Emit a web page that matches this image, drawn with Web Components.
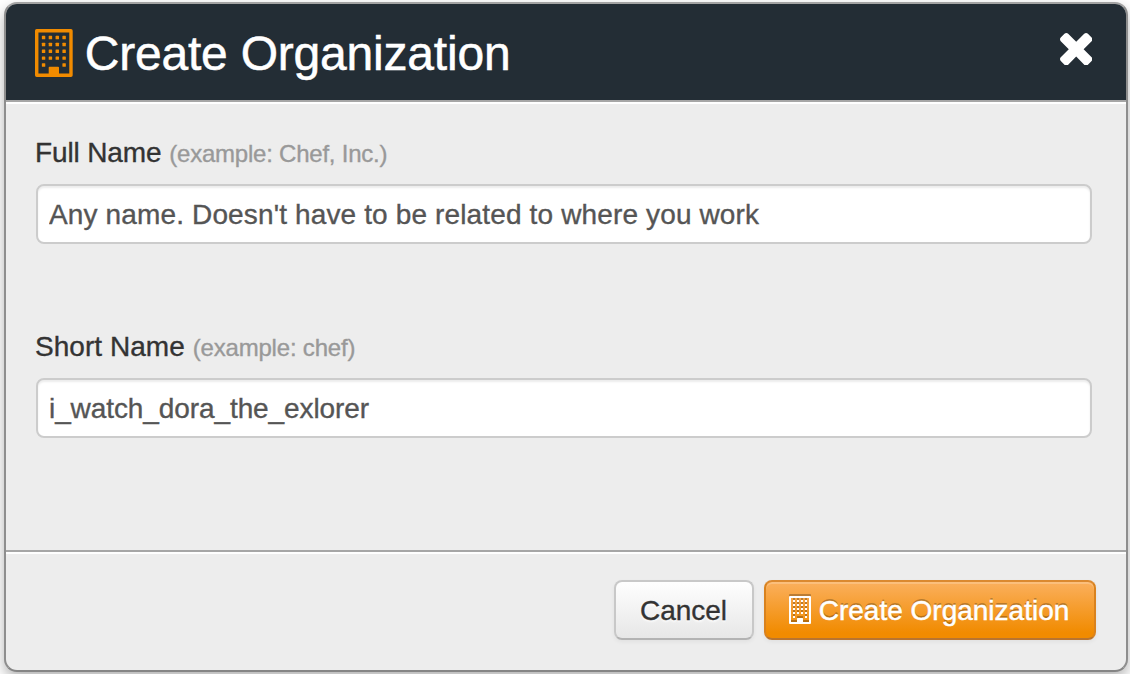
<!DOCTYPE html>
<html lang="en">
<head>
<meta charset="utf-8">
<title>Create Organization</title>
<style>
body{margin:0;background:#fff;font-family:"Liberation Sans",Arial,sans-serif;color:#333;width:1130px;height:674px;overflow:hidden}
</style>
</head>
<body>
<modal-dialog>
  <dialog-title slot="header">Create Organization</dialog-title>
  <form-field label="Full Name" hint="(example: Chef, Inc.)" value="Any name. Doesn't have to be related to where you work" style="--label-ls:-.14px;--hint-ls:-.23px;--value-ls:.14px"></form-field>
  <form-field label="Short Name" hint="(example: chef)" value="i_watch_dora_the_exlorer" style="--label-ls:.04px;--hint-ls:-.2px;--value-ls:-.09px"></form-field>
  <action-button slot="footer">Cancel</action-button>
  <action-button slot="footer" primary><building-icon slot="icon"></building-icon>Create Organization</action-button>
</modal-dialog>
<script>
const define = (name, html, setup) => customElements.define(name, class extends HTMLElement {
  connectedCallback() {
    if (this.shadowRoot) return;
    this.attachShadow({mode: 'open'}).innerHTML = html;
    if (setup) setup(this, this.shadowRoot);
  }
});

define('building-icon', `<style>
:host{display:block;width:22px;height:28px;flex:none}
svg{display:block;width:100%;height:100%;overflow:visible}
</style><svg viewBox="0 0 11 14" fill="currentColor"><path fill-rule="evenodd" d="M.5 0h10a.5.5 0 0 1 .5.5v13a.5.5 0 0 1-.5.5H.5a.5.5 0 0 1-.5-.5V.5A.5.5 0 0 1 .5 0zM1 1v12h3v-1.75q0-.25.25-.25h2.5q.25 0 .25.25V13h3V1z"/><g id="w"></g></svg>`,
(host, root) => {
  let s = '';
  for (let y = 2; y <= 10; y += 2) for (let x = 2; x <= 8; x += 2)
    if (y < 10 || x === 2 || x === 8) s += `<rect x="${x}" y="${y}" width="1" height="1" rx=".15"/>`;
  root.getElementById('w').innerHTML = s;
});

define('close-button', `<style>
:host{display:block;width:32.4px;height:32.4px}
button{all:unset;display:block;width:100%;height:100%;color:#fff;cursor:pointer}
svg{display:block}
</style><button aria-label="Close"><svg width="100%" height="100%" viewBox="302 366 1188 1188" fill="currentColor"><path d="M1490 1322q0 40-28 68l-136 136q-28 28-68 28t-68-28l-294-294-294 294q-28 28-68 28t-68-28l-136-136q-28-28-28-68t28-68l294-294-294-294q-28-28-28-68t28-68l136-136q28-28 68-28t68 28l294 294 294-294q28-28 68-28t68 28l136 136q28 28 28 68t-28 68l-294 294 294 294q28 28 28 68z"/></svg></button>`);

define('dialog-title', `<style>
:host{display:flex;align-items:center;padding-top:2px;color:#fff}
building-icon{width:37.7px;height:48px;color:#f18b00}
h1{margin:2px 0 0 12px;font-size:48px;line-height:56px;font-weight:400;letter-spacing:-.2px;white-space:nowrap;-webkit-text-stroke:.5px currentColor}
</style><building-icon></building-icon><h1><slot></slot></h1>`);

define('form-field', `<style>
:host{display:block;height:194px}
label{display:flex;align-items:baseline;height:48px;line-height:34px;font-size:28px;white-space:nowrap;letter-spacing:var(--label-ls,0);-webkit-text-stroke:.35px currentColor}
small{font-size:24px;color:#999;margin-left:8px;letter-spacing:var(--hint-ls,0)}
input{display:block;box-sizing:border-box;width:1056px;height:60px;margin:0 0 0 1px;padding:2px 11px 0;border:2px solid #ccc;border-radius:8px;background:#fff;box-shadow:inset 0 2px 2px rgba(0,0,0,.075);font:28px "Liberation Sans",Arial,sans-serif;color:#555;letter-spacing:var(--value-ls,0);outline:0;-webkit-text-stroke:.35px currentColor}
</style><label for="i"><span></span><small></small></label><input id="i">`,
(host, root) => {
  root.querySelector('span').textContent = host.getAttribute('label');
  root.querySelector('small').textContent = host.getAttribute('hint');
  root.querySelector('input').value = host.getAttribute('value');
});

define('action-button', `<style>
:host{display:block}
button{display:flex;align-items:center;justify-content:center;gap:8px;box-sizing:border-box;width:140px;height:60px;padding:0 1px 0 0;margin:0;border:2px solid #c8c8c8;border-bottom-color:#b3b3b3;border-radius:8px;background:linear-gradient(#fff,#e6e6e6);background-clip:border-box;background-origin:border-box;box-shadow:inset 0 2px 0 rgba(255,255,255,.2),0 2px 4px rgba(0,0,0,.05);color:#333;font:28px/40px "Liberation Sans",Arial,sans-serif;text-shadow:0 2px 2px rgba(255,255,255,.75);white-space:nowrap;-webkit-text-stroke:.35px currentColor}
span{margin-top:2px}
:host([primary]) button{width:332px;padding-right:2px;border-color:#db892f #d9821e #b87430;background-image:linear-gradient(#fbb161,#f18b00 88%);color:#fff;text-shadow:0 -2px 0 rgba(0,0,0,.25);-webkit-text-stroke-width:.5px}
::slotted(building-icon){filter:drop-shadow(0 -2px 0 rgba(0,0,0,.25))}
</style><button><slot name="icon"></slot><span><slot></slot></span></button>`);

define('modal-dialog', `<style>
:host{display:flex;flex-direction:column;box-sizing:border-box;width:1124px;height:670px;margin:2px 0 0 4px;border:2px solid #8e8e8e;border-top-color:#a3a3a3;border-bottom-color:#858585;border-radius:13px;background:#ededed;box-shadow:0 6px 14px rgba(0,0,0,.3);overflow:hidden}
header{display:flex;align-items:center;justify-content:space-between;box-sizing:border-box;height:98px;padding:0 34px 0 29px;background:#232d35;border-bottom:2px solid #a6a6a6;flex:none}
close-button{margin-bottom:6px}
main{box-sizing:border-box;height:448px;border-top:2px solid #fff;padding:32px 29px 0;flex:none}
footer{display:flex;justify-content:flex-end;gap:10px;flex:1;border-top:2px solid #a6a6a6;box-shadow:inset 0 2px 0 #fff;padding:28px 30px 0 0}
</style><header><slot name="header"></slot><close-button></close-button></header><main><slot></slot></main><footer><slot name="footer"></slot></footer>`);
</script>
</body>
</html>
